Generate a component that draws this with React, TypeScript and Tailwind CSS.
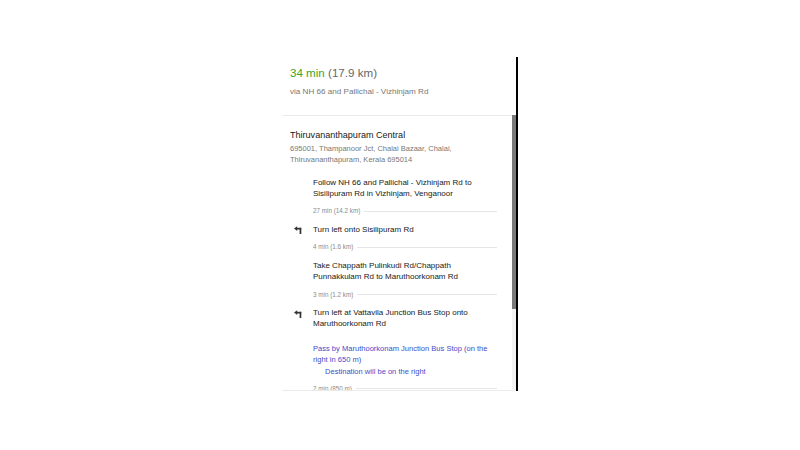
import React from 'react'

const font = { fontFamily: '"Liberation Sans", Arial, sans-serif' }

function TurnLeft() {
  return (
    <svg width="9" height="8" viewBox="0 0 9 8" className="block">
      <path d="M0 2.6 L3.2 0.2 L3.2 5 Z" fill="#333" />
      <rect x="3" y="1.8" width="4.2" height="1.7" fill="#333" />
      <rect x="5.6" y="1.8" width="1.7" height="6.2" fill="#333" />
    </svg>
  )
}

function Step({ text, turn, className = '' }: { text: string; turn?: boolean; className?: string }) {
  return (
    <div className={`flex ${className}`}>
      <div className="w-[23px] shrink-0 flex pt-[2.5px] pl-[4px]">
        {turn && <TurnLeft />}
      </div>
      <div className="text-[8px] leading-[11px] text-[#202020]">{text}</div>
    </div>
  )
}

function Distance({ label, className = '' }: { label: string; className?: string }) {
  return (
    <div className={`flex items-center pl-[23px] ${className}`}>
      <span className="text-[6.3px] leading-[8px] text-[#8a8a8a] whitespace-nowrap">{label}</span>
      <div className="flex-1 h-px bg-[#e6e6e6] ml-[4px]" />
    </div>
  )
}

export default function App() {
  return (
    <div className="w-[800px] h-[450px] bg-white pt-[57px]" style={font}>
      <div className="mx-auto w-[236px] h-[334px] flex">
        <div className="flex-1 flex flex-col min-w-0">
          <div className="h-[58px] shrink-0 pl-[8px] pt-[9px]">
            <div className="text-[11.6px] leading-[14px] whitespace-nowrap">
              <span className="text-[#3da528]">34 min</span>{' '}
              <span className="text-[#666]">(17.9 km)</span>
            </div>
            <div className="mt-[5.5px] text-[8.1px] leading-[11px] text-[#777]">
              via NH 66 and Pallichal - Vizhinjam Rd
            </div>
          </div>
          <div className="flex-1 flex min-h-0">
            <div className="flex-1 min-w-0 overflow-hidden border-y border-[#ebebeb] pl-[8px] pr-[15px]">
              <div className="pt-[13px] text-[9.05px] leading-[12px] text-[#202020]">
                Thiruvananthapuram Central
              </div>
              <div className="mt-[1.5px] text-[7.5px] leading-[11px] text-[#777]">
                695001, Thampanoor Jct, Chalai Bazaar, Chalai, Thiruvananthapuram, Kerala 695014
              </div>
              <Step
                className="mt-[12px]"
                text="Follow NH 66 and Pallichal - Vizhinjam Rd to Sisilipuram Rd in Vizhinjam, Venganoor"
              />
              <Distance className="mt-[8.5px]" label="27 min (14.2 km)" />
              <Step className="mt-[8.5px]" turn text="Turn left onto Sisilipuram Rd" />
              <Distance className="mt-[8.5px]" label="4 min (1.6 km)" />
              <Step
                className="mt-[8.5px]"
                text="Take Chappath Pulinkudi Rd/Chappath Punnakkulam Rd to Maruthoorkonam Rd"
              />
              <Distance className="mt-[9px]" label="3 min (1.2 km)" />
              <Step
                className="mt-[8.5px]"
                turn
                text="Turn left at Vattavila Junction Bus Stop onto Maruthoorkonam Rd"
              />
              <div className="mt-[14px] pl-[23px] text-[7.55px] leading-[11px] text-[#3f4cc9]">
                Pass by Maruthoorkonam Junction Bus Stop (on the right in 650 m)
              </div>
              <div className="mt-[0.5px] pl-[35px] text-[7.55px] leading-[11px] text-[#3f4cc9]">
                Destination will be on the right
              </div>
              <Distance className="mt-[8px]" label="2 min (850 m)" />
            </div>
            <div className="w-[4px] shrink-0 bg-[#f3f3f3]">
              <div className="h-[194px] bg-[#7a7a7a]" />
            </div>
          </div>
        </div>
        <div className="w-[2px] shrink-0 bg-black" />
      </div>
    </div>
  )
}
